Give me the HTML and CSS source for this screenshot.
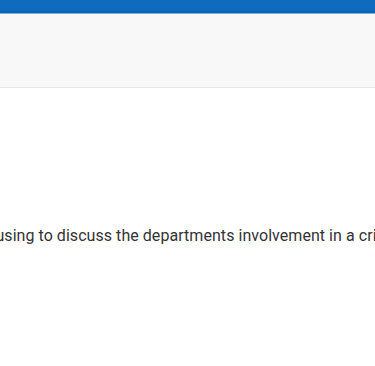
FILE: index.html
```html
<!DOCTYPE html>
<html>
<head>
<meta charset="utf-8">
<link rel="stylesheet" href="styles.css">
</head>
<body>
<div class="topbar"></div>
<div class="subbar"></div>
<main class="content">
<p class="line">refusing to discuss the departments involvement in a criminal case</p>
</main>
</body>
</html>
```
FILE: styles.css
```css
html, body { margin: 0; padding: 0; background: #fff; overflow: hidden; }
body { width: 375px; height: 366px; font-family: Roboto, "Liberation Sans", sans-serif; }
.topbar { height: 11px; background: #0f6bbd; border-bottom: 2px solid #0b62b3; }
.subbar { height: 73px; background: #f8f8f8; border-top: 1px solid #7fb0dc; border-bottom: 1px solid #e6e6e6; }
.content { padding-top: 136px; }
.line { margin: 0 0 0 -24px; white-space: nowrap; font-size: 16px; letter-spacing: 0.05px; color: #333; line-height: 24px; }
```
